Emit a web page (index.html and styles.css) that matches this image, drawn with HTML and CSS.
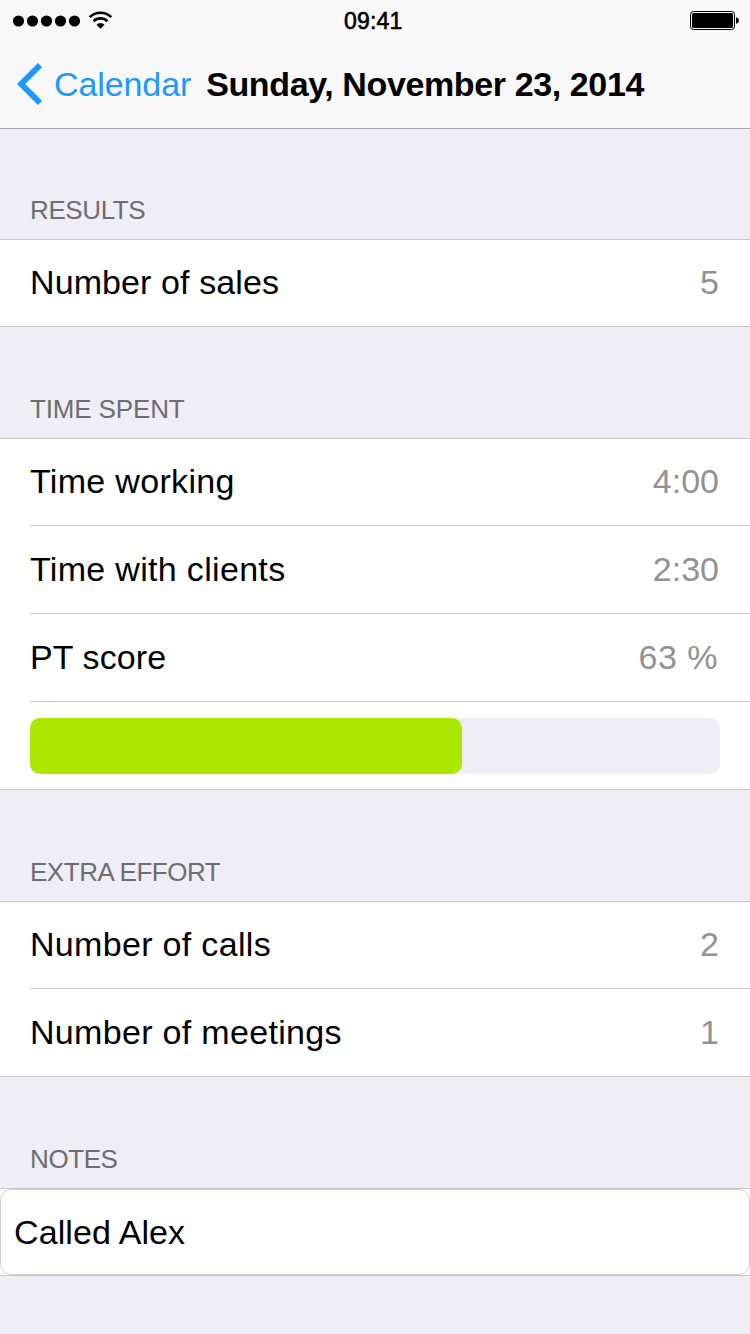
FILE: index.html
```html
<!DOCTYPE html>
<html lang="en">
<head>
<meta charset="utf-8">
<title>Sunday, November 23, 2014</title>
<link rel="stylesheet" href="styles.css">
</head>
<body>
<div class="screen">
  <header class="top">
    <div class="status">
      <div class="signal">
        <svg width="68" height="12" viewBox="0 0 68 12"><circle cx="5.5" cy="6" r="5.6"/><circle cx="19.5" cy="6" r="5.6"/><circle cx="33.5" cy="6" r="5.6"/><circle cx="47.5" cy="6" r="5.6"/><circle cx="61.5" cy="6" r="5.6"/></svg>
        <svg class="wifi" width="25" height="18" viewBox="0 0 26 19"><g fill="none" stroke="#000" stroke-width="2.8"><path d="M1.6 6.5A16.2 16.2 0 0 1 24.4 6.5"/><path d="M5.7 10.8A10.4 10.4 0 0 1 20.3 10.8"/></g><path d="M8.8 14.4A5.8 5.8 0 0 1 17.2 14.400L13 18.800Z"/></svg>
      </div>
      <span class="clock">09:41</span>
      <svg class="battery" width="50" height="19" viewBox="0 0 50 19"><rect x=".5" y=".5" width="44" height="18" rx="3" fill="none" stroke="#000"/><rect x="2" y="2" width="41" height="15" rx="1.5"/><path d="M46 6.3c1.8.4 3 1.6 3 3.2s-1.200 2.800-3 3.200z"/></svg>
    </div>
    <nav class="nav">
      <a class="back"><svg width="26" height="42" viewBox="0 0 26 42"><path d="M23 2.100L4.100 21L23 39.900" fill="none" stroke="#1d98ff" stroke-width="5.800"/></svg><span>Calendar</span></a>
      <h1 class="title">Sunday, November 23, 2014</h1>
    </nav>
  </header>
  <main>
    <section>
      <h2 class="heading first">RESULTS</h2>
      <div class="list">
        <div class="row"><span class="label snug">Number of sales</span><span class="value">5</span></div>
      </div>
    </section>
    <section>
      <h2 class="heading loose">TIME SPENT</h2>
      <div class="list">
        <div class="row"><span class="label">Time working</span><span class="value">4:00</span></div>
        <div class="row"><span class="label">Time with clients</span><span class="value">2:30</span></div>
        <div class="row"><span class="label snug">PT score</span><span class="value percent">63 %</span></div>
        <div class="row"><div class="track"><div class="fill"></div></div></div>
      </div>
    </section>
    <section>
      <h2 class="heading tight">EXTRA EFFORT</h2>
      <div class="list">
        <div class="row"><span class="label">Number of calls</span><span class="value">2</span></div>
        <div class="row"><span class="label">Number of meetings</span><span class="value">1</span></div>
      </div>
    </section>
    <section>
      <h2 class="heading">NOTES</h2>
      <div class="list"><div class="note"><span>Called Alex</span></div></div>
    </section>
  </main>
</div>
</body>
</html>
```
FILE: styles.css
```css
* { box-sizing: border-box; }
body {
  margin: 0;
  background: #efeef4;
  font-family: "Liberation Sans", Arial, sans-serif;
  color: #000;
}
.screen { width: 750px; height: 1334px; overflow: hidden; background: #efeef4; }
svg { display: block; flex: none; }
.top { height: 129px; background: #f8f8f8; border-bottom: 1px solid #a8a7ac; }
.status {
  display: grid;
  grid-template-columns: 331px auto 1fr;
  align-items: center;
  height: 40px;
  padding: 1px 10px 0 13px;
}
.signal { display: flex; align-items: center; gap: 7px; }
.wifi { margin-top: -1px; }
.clock { font-size: 23px; line-height: 28px; -webkit-text-stroke: .6px #000; letter-spacing: .2px; }
.battery { justify-self: end; }
.nav { display: flex; align-items: center; height: 88px; padding-left: 17px; }
.back { display: flex; align-items: center; gap: 11px; color: #1d98ff; font-size: 34px; letter-spacing: -.1px; }
.title { margin: 0 0 0 15px; font-size: 34px; font-weight: 700; letter-spacing: -.38px; white-space: nowrap; }
.heading {
  height: 111px;
  margin: 0;
  padding: 67px 30px 0;
  font-size: 26px;
  line-height: 30px;
  font-weight: 400;
  letter-spacing: -.4px;
  color: #6d6d72;
}
.heading.first { height: 110px; padding-top: 66px; }
.heading.loose { letter-spacing: -.15px; }
.heading.tight { letter-spacing: -.48px; }
.list { background: #fff; border: solid #c8c7cc; border-width: 1px 0; }
.row {
  display: flex;
  align-items: center;
  justify-content: space-between;
  height: 88px;
  margin-left: 30px;
  padding-right: 30px;
  border-bottom: 1px solid #c8c7cc;
  font-size: 34px;
  line-height: 40px;
}
.row:first-child { height: 87px; }
.row:last-child { height: 87px; border-bottom: 0; }
.row:only-child { height: 86px; }
.label, .value { padding-bottom: 2px; }
.label { letter-spacing: .32px; }
.label.snug { letter-spacing: .1px; }
.value { padding-right: 1px; color: #929292; }
.value.percent { padding-right: 2px; letter-spacing: .5px; }
.track { width: 690px; height: 56px; border-radius: 10px; background: #efeef4; }
.fill { width: 432px; height: 56px; border-radius: 10px; background: #ade600; }
.note {
  display: flex;
  align-items: center;
  height: 86px;
  padding-left: 13px;
  border: 1px solid #d2d2d4;
  border-radius: 11px;
  font-size: 34px;
  letter-spacing: .1px;
}
```
